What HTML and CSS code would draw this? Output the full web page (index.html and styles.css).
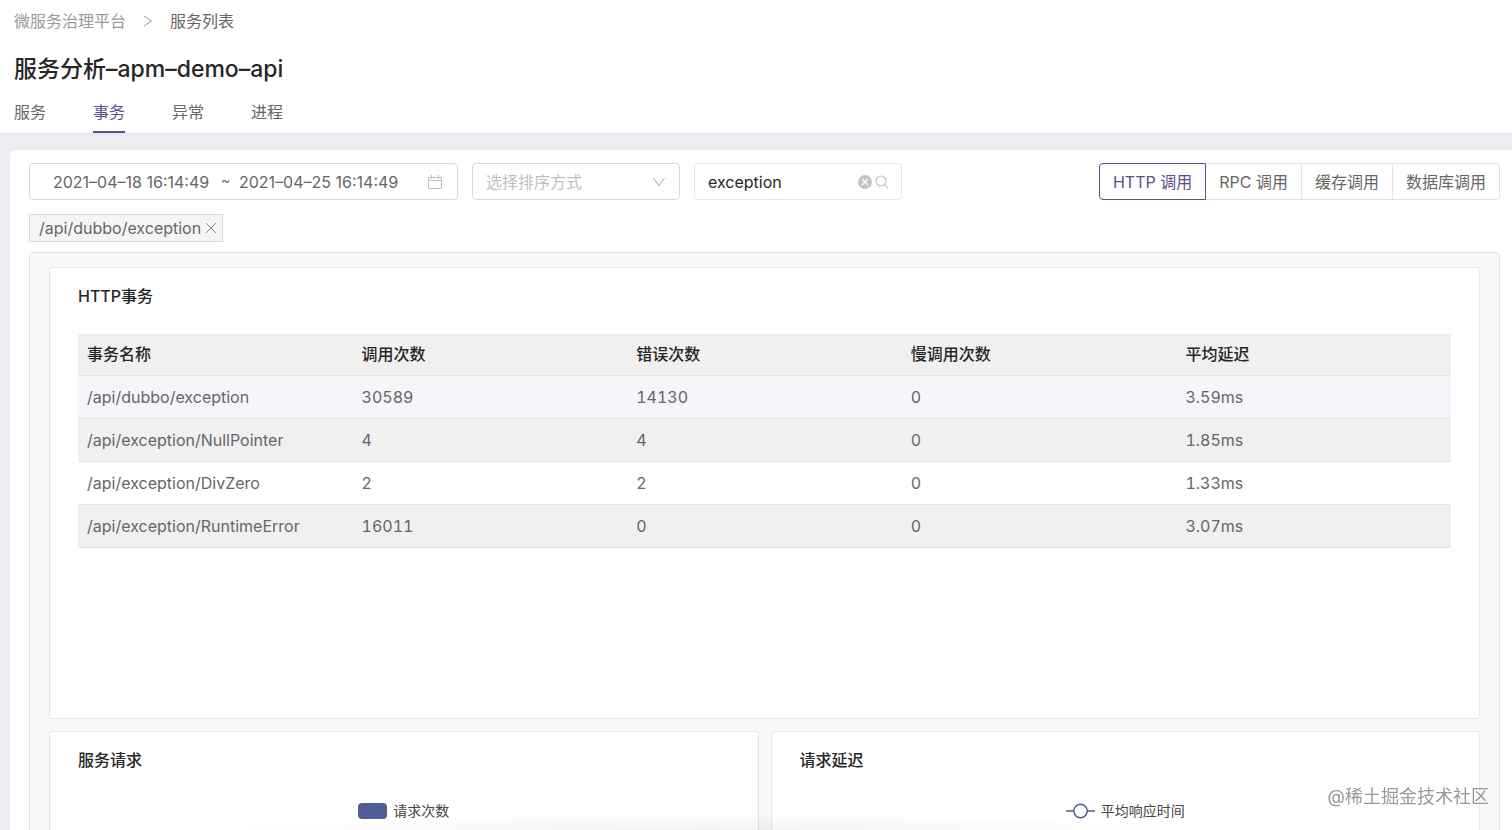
FILE: index.html
```html
<!DOCTYPE html>
<html lang="zh-CN">
<head>
  <meta charset="UTF-8">
  <meta name="viewport" content="width=device-width, initial-scale=1.0">
  <title>服务分析</title>
  <link rel="stylesheet" href="styles.css">
</head>
<body>
  <header class="page-header">
    <nav class="breadcrumb">
      <a href="#">微服务治理平台</a>
      <svg width="10" height="12" viewBox="0 0 10 12" fill="none" stroke="#999"><path d="M1 1l7.500 5L1 11"/></svg>
      <span>服务列表</span>
    </nav>
    <h1>服务分析–apm–demo–api</h1>
    <nav class="tabs">
      <a href="#">服务</a>
      <a href="#" class="active">事务</a>
      <a href="#">异常</a>
      <a href="#">进程</a>
    </nav>
  </header>

  <main class="panel">
    <div class="toolbar">
      <div class="control date-range">
        <input type="text" value="2021–04–18 16:14:49" aria-label="开始时间">
        <span class="tilde">~</span>
        <input type="text" value="2021–04–25 16:14:49" aria-label="结束时间">
        <svg width="16" height="16" viewBox="0 0 16 16" fill="none" stroke="#bfbfbf"><path d="M1.500 3.500h13v11h-13zM1.500 6.500h13M4.500 1v4M11.500 1v4"/></svg>
      </div>

      <div class="control sort">
        <select aria-label="选择排序方式">
          <option value="">选择排序方式</option>
          <option value="count">调用次数</option>
          <option value="error">错误次数</option>
        </select>
        <svg width="14" height="10" viewBox="0 0 14 10" fill="none" stroke="#b5b5b5" stroke-width="1.200"><path d="M1.500 1L7 8.500 12.500 1"/></svg>
      </div>

      <div class="control search">
        <input type="text" value="exception" aria-label="搜索">
        <button type="button" aria-label="清除">
          <svg width="14" height="14" viewBox="0 0 14 14"><circle cx="7" cy="7" r="7" fill="#c4c4c4"/><path d="M4 4l6 6M10 4l-6 6" stroke="#fff" stroke-width="1.200"/></svg>
        </button>
        <button type="button" aria-label="搜索">
          <svg width="14" height="14" viewBox="0 0 14 14" fill="none" stroke="#c4c4c4" stroke-width="1.200"><circle cx="6" cy="6" r="5"/><path d="M9.600 9.600L13.300 13.300"/></svg>
        </button>
      </div>

      <div class="call-types">
        <button type="button" class="active">HTTP 调用</button>
        <button type="button">RPC 调用</button>
        <button type="button">缓存调用</button>
        <button type="button">数据库调用</button>
      </div>
    </div>

    <div class="tag">
      <span>/api/dubbo/exception</span>
      <button type="button" aria-label="关闭">
        <svg width="12" height="12" viewBox="0 0 12 12" fill="none" stroke="#888"><path d="M1 1l10 10M11 1L1 11"/></svg>
      </button>
    </div>

    <div class="board">
      <section class="card card-table">
        <h2>HTTP事务</h2>
        <table>
          <thead>
            <tr><th>事务名称</th><th>调用次数</th><th>错误次数</th><th>慢调用次数</th><th>平均延迟</th></tr>
          </thead>
          <tbody>
            <tr class="selected"><td>/api/dubbo/exception</td><td>30589</td><td>14130</td><td>0</td><td>3.59ms</td></tr>
            <tr><td>/api/exception/NullPointer</td><td>4</td><td>4</td><td>0</td><td>1.85ms</td></tr>
            <tr><td>/api/exception/DivZero</td><td>2</td><td>2</td><td>0</td><td>1.33ms</td></tr>
            <tr><td>/api/exception/RuntimeError</td><td>16011</td><td>0</td><td>0</td><td>3.07ms</td></tr>
          </tbody>
        </table>
      </section>

      <div class="charts">
        <section class="card card-chart">
          <h2>服务请求</h2>
          <div class="legend"><i class="swatch"></i>请求次数</div>
        </section>
        <section class="card card-chart">
          <h2>请求延迟</h2>
          <div class="legend">
            <svg width="29" height="16" viewBox="0 0 29 16" fill="none" stroke="#525b84" stroke-width="1.400"><path d="M0 8h8M21 8h8"/><circle cx="14.500" cy="8" r="6.700"/></svg>
            平均响应时间
          </div>
        </section>
      </div>
    </div>
  </main>
  <div class="bottom-shade"></div>
  <div class="watermark">@稀土掘金技术社区</div>
</body>
</html>
```
FILE: styles.css
```css
* {
  box-sizing: border-box;
}

body {
  margin: 0;
  height: 100vh;
  overflow: hidden;
  display: flex;
  flex-direction: column;
  font-family: Inter, "Noto Sans CJK SC", sans-serif;
  font-size: 16px;
  line-height: 24px;
  color: #666;
  background: #eeecf2;
}

a {
  color: inherit;
  text-decoration: none;
}

svg {
  display: block;
  flex: none;
}

input, select, button {
  font: inherit;
  color: inherit;
  margin: 0;
  padding: 0;
  border: none;
  outline: none;
  background: none;
}

button {
  cursor: pointer;
}

.page-header {
  flex: none;
  padding: 9px 14px 0;
  background: #fff;
  border-bottom: 1px solid #e3e2e8;
}

.breadcrumb {
  display: flex;
  align-items: center;
  gap: 17px;
}

.breadcrumb a {
  color: #999;
}

.page-header h1 {
  margin: 20px 0 12px;
  font-size: 23px;
  line-height: 32px;
  font-weight: 500;
  color: #262626;
}

.tabs {
  display: flex;
  gap: 47px;
}

.tabs a {
  height: 36px;
  padding-top: 3px;
}

.tabs .active {
  color: #5a4f90;
  border-bottom: 2px solid #5a4f90;
}

.panel {
  flex: 1;
  min-height: 0;
  overflow: hidden;
  display: flex;
  flex-direction: column;
  align-items: flex-start;
  margin: 16px 0 0 10px;
  padding: 13px 12px 0 19px;
  background: #fff;
  border-top-left-radius: 6px;
}

.toolbar {
  flex: none;
  display: flex;
  gap: 14px;
  width: 100%;
}

.control {
  display: flex;
  align-items: center;
  height: 37px;
  border: 1px solid #d9d9d9;
  border-radius: 4px;
}

.date-range {
  width: 429px;
  padding: 0 14px 0 23px;
}

.date-range input {
  width: 160px;
}

.date-range .tilde {
  width: 26px;
  padding: 0 0 4px 8px;
  font-size: 14px;
}

.date-range svg {
  margin-left: auto;
}

.sort {
  width: 208px;
  padding: 0 13px;
}

.sort select {
  flex: 1;
  appearance: none;
  color: #bfbfbf;
}

.search {
  width: 208px;
  padding: 0 12px 0 13px;
  gap: 3px;
  border-color: #e5e5e5;
}

.search input {
  flex: 1;
  min-width: 0;
  color: #262626;
}

.call-types {
  display: flex;
  margin-left: auto;
}

.call-types button {
  height: 37px;
  padding: 0 13px;
  border: 1px solid #e3e3e3;
  border-left: none;
  white-space: nowrap;
}

.call-types button:last-child {
  border-radius: 0 4px 4px 0;
}

.call-types .active {
  color: #5a4f90;
  border: 1px solid #5a4f90;
  border-radius: 4px 0 0 4px;
}

.tag {
  flex: none;
  display: flex;
  align-items: center;
  gap: 4px;
  height: 28px;
  margin: 14px 0 10px;
  padding: 0 5px 0 9px;
  background: #f5f5f5;
  border: 1px solid #d9d9d9;
}

.board {
  flex: none;
  width: 100%;
  padding: 14px 19px;
  background: #f8f8fb;
  border: 1px solid #e2e2e6;
  border-radius: 4px;
}

.card {
  padding: 16px 28px;
  background: #fff;
  border: 1px solid #e8e8ec;
  border-radius: 3px;
}

.card h2 {
  margin: 0;
  font-size: 16px;
  line-height: 24px;
  font-weight: 500;
  color: #262626;
}

.card-table {
  min-height: 452px;
}

table {
  width: 100%;
  margin-top: 26px;
  table-layout: fixed;
  border-collapse: collapse;
  font-variant-numeric: tabular-nums;
}

th, td {
  height: 43px;
  padding: 0 9px;
  text-align: left;
  border-bottom: 1px solid #e4e4e6;
}

th {
  height: 41px;
  font-weight: 500;
  color: #262626;
  background: #f0f0f0;
}

tbody tr:nth-child(even) {
  background: #f0f0f0;
}

tbody .selected {
  background: #f5f5fa;
}

.charts {
  display: grid;
  grid-template-columns: 1fr 1fr;
  gap: 12px;
  margin-top: 12px;
}

.card-chart {
  min-height: 360px;
}

.legend {
  display: flex;
  align-items: center;
  justify-content: center;
  gap: 6px;
  margin-top: 28px;
  font-size: 14px;
  line-height: 22px;
  color: #444;
}

.swatch {
  width: 29px;
  height: 16px;
  border-radius: 4px;
  background: #4f5f96;
}

.bottom-shade {
  position: fixed;
  left: 200px;
  right: 300px;
  bottom: 0;
  height: 16px;
  background: radial-gradient(ellipse at bottom, rgba(0,0,0,0.05), transparent 70%);
}

.watermark {
  position: fixed;
  right: 23px;
  bottom: 21px;
  font-size: 18px;
  color: #999;
}
```
